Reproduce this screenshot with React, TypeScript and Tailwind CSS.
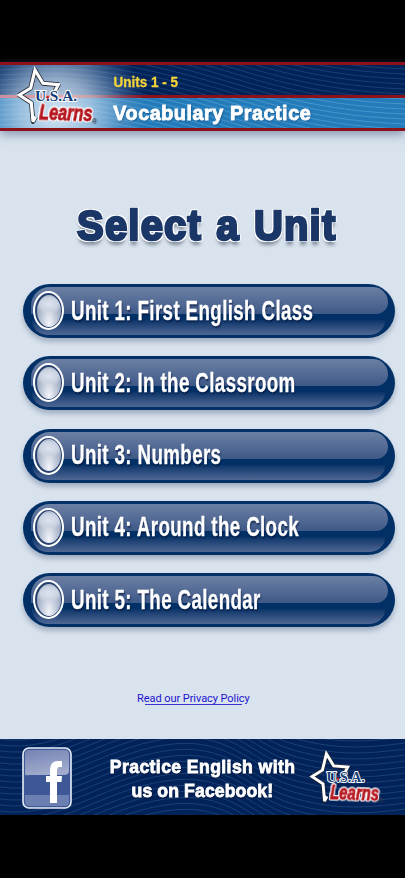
import React from 'react';

const units = [
  'Unit 1: First English Class',
  'Unit 2: In the Classroom',
  'Unit 3: Numbers',
  'Unit 4: Around the Clock',
  'Unit 5: The Calendar',
];

const footerLines = Array.from({ length: 34 }, (_, i) => i * 6 - 50);
const headerLines = Array.from({ length: 30 }, (_, i) => i * 5 - 75);

const HeaderWaves: React.FC<{ color: string; shift: number }> = ({ color, shift }) => (
  <svg className="absolute inset-0 h-full w-full" viewBox="0 0 405 30" preserveAspectRatio="none" fill="none" stroke={color} strokeWidth="1">
    {headerLines.map((y) => (
      <path key={y} d={`M0 ${y + shift} C70 ${y + shift - 4} 110 ${y + shift} 180 ${y + shift + 18} S300 ${y + shift + 60} 405 ${y + shift + 64}`} />
    ))}
  </svg>
);

const FooterWaves: React.FC = () => (
  <svg className="absolute inset-0 h-full w-full" viewBox="0 0 405 76" fill="none" stroke="#1a4075" strokeWidth="1">
    {footerLines.map((y) => (
      <path key={y} d={`M0 ${y + 14} C60 ${y + 22} 100 ${y - 18} 165 ${y - 28} S250 ${y} 290 ${y + 12} S360 ${y + 24} 405 ${y + 18}`} />
    ))}
  </svg>
);

const STAR = 'M165 107 L175 88 L129 84 L105 44 L92 98 L58 119 L94 143 L99 199 L107 184';

const Logo: React.FC<{ className: string; usa: string }> = ({ className, usa }) => (
  <svg className={className} viewBox="48 32 250 180" overflow="visible">
    <path d={STAR} fill="none" stroke="#20242c" strokeWidth="14" strokeLinejoin="round" />
    <path d={STAR} fill="none" stroke="#fff" strokeWidth="9.5" strokeMiterlimit="3" />
    <text
      x="105" y="138" fontSize="46" fontWeight="bold" textLength="126" lengthAdjust="spacingAndGlyphs"
      fill={usa} stroke="#fff" strokeWidth="6" strokeLinejoin="round" paintOrder="stroke"
      className="font-['Liberation_Serif',serif]"
    >
      U.S.A.
    </text>
    <circle cx="143" cy="126" r="4" fill="#c51c25" />
    <g
      transform="translate(117 192) rotate(2)"
      className="[filter:drop-shadow(2.5px_0_0_#fff)_drop-shadow(-2.5px_0_0_#fff)_drop-shadow(0_2.5px_0_#fff)_drop-shadow(0_-2.5px_0_#fff)]"
    >
      <text
        fontSize="67" fontWeight="bold" fontStyle="italic" textLength="160" lengthAdjust="spacingAndGlyphs"
        fill="#b5151e" stroke="#b5151e" strokeWidth="2.5" strokeLinejoin="round"
        className="font-['Liberation_Sans',sans-serif]"
      >
        Learns
      </text>
    </g>
    <text x="276" y="207" fontSize="22" fontWeight="bold" fill="#303947" className="font-['Liberation_Sans',sans-serif]">®</text>
  </svg>
);

const UnitButton: React.FC<{ label: string }> = ({ label }) => (
  <button className="relative flex h-[54px] w-[372px] items-center rounded-[27px] bg-[#003066] pl-[10px] text-left shadow-[0_4px_5px_rgba(80,100,130,0.4)]">
    <span className="absolute top-[3px] right-[7px] left-[8px] h-[27px] rounded-tl-[22px] rounded-tr-[18px] rounded-br-[14px] bg-linear-to-b from-[#6d80a4] to-[#3e5988]" />
    <span className="absolute right-[10px] bottom-[3px] left-[9px] h-[15px] rounded-b-[20px] bg-linear-to-b from-[#0a3469] to-[#4f6894]" />
    <span className="relative -mt-px flex h-[39px] w-[31px] shrink-0 rounded-[50%] border-2 border-white bg-[#29436f] p-[1.5px]">
      <span className="h-full w-full rounded-[50%] bg-[radial-gradient(ellipse_60%_30%_at_50%_28%,#dde3ee_0%,#ccd4e3_60%,rgba(204,212,227,0)_100%),radial-gradient(ellipse_at_50%_88%,#f2f5fa_0%,#c3ccdc_40%,#98a4be_80%)]" />
    </span>
    <span className="relative -mt-px ml-[7px] origin-left scale-x-[0.67] whitespace-nowrap text-[28px] leading-[54px] font-bold tracking-[0.55px] text-white [-webkit-text-stroke:0.3px_white] [text-shadow:1px_2px_2px_rgba(0,20,60,0.7)]">
      {label}
    </span>
  </button>
);

const App: React.FC = () => {
  return (
    <div className="flex h-[878px] w-[405px] flex-col overflow-hidden bg-black pt-[62px] pb-[63px] font-['Liberation_Sans',sans-serif]">
      <header className="relative z-10 flex h-[69px] shrink-0 flex-col bg-[#8d101b] py-[3px] shadow-[0_3px_10px_rgba(70,90,130,0.6)]">
        <div className="relative h-[30px] bg-[#02235a]">
          <HeaderWaves color="#183f72" shift={0} />
          <p className="relative z-10 origin-left scale-x-[0.9] pl-[126px] text-[15px] leading-[33px] font-bold text-[#f5d43a] [-webkit-text-stroke:0.3px_#f5d43a]">
            Units 1 - 5
          </p>
        </div>
        <div className="relative mt-[3px] h-[30px] bg-[#247bb9]">
          <HeaderWaves color="#4695cb" shift={2} />
          <h2 className="relative z-10 origin-left scale-x-[0.94] pl-[120.5px] text-[21px] leading-[30px] font-bold tracking-[0.6px] text-white [-webkit-text-stroke:0.9px_white] [text-shadow:1px_1px_2px_#12538b]">
            Vocabulary Practice
          </h2>
        </div>
        <div className="absolute inset-y-[3px] left-0 w-[150px] bg-[radial-gradient(ellipse_90px_85px_at_56px_48px,rgba(225,237,248,0.92)_0%,rgba(190,213,235,0.75)_40%,rgba(130,170,210,0.35)_75%,rgba(110,160,210,0)_100%)]">
          <div className="absolute top-[30px] left-0 h-[3px] w-[110px] bg-linear-to-r from-[#c98f9d] via-[#e6a5a8] to-transparent" />
          <Logo className="relative mt-px ml-[16px] h-[60px] w-[83.3px]" usa="#123b78" />
        </div>
      </header>

      <main className="flex flex-1 flex-col bg-[#d9e3ee]">
        <h1 className="mt-[68px] ml-[77px] origin-left scale-x-[0.93] text-[43px] leading-[52px] font-bold tracking-[1.3px] whitespace-nowrap text-[#1b3767] [word-spacing:2px] [-webkit-text-stroke:2.6px_#1b3767] [text-shadow:2px_0_0_#fff,-2px_0_0_#fff,0_2px_0_#fff,0_-2px_0_#fff,2px_2px_0_#fff,-2px_2px_0_#fff,2px_-2px_0_#fff,-2px_-2px_0_#fff,0_5px_4px_#7d8795]">
          Select a Unit
        </h1>
        <div className="mt-[33px] flex flex-col gap-[18.25px] pl-[23px]">
          {units.map((unit) => (
            <UnitButton key={unit} label={unit} />
          ))}
        </div>
        <a href="#" className="relative mt-[65px] ml-[137px] w-[113px] whitespace-nowrap font-['Roboto',sans-serif] text-[11px] leading-[14px] tracking-[-0.06px] text-[#1d13cf]">
          Read our Privacy Policy
          <span className="absolute bottom-px left-[8px] h-px w-[97px] bg-[#3a33d6]" />
        </a>
      </main>

      <footer className="relative flex h-[76px] shrink-0 overflow-hidden bg-[#02235a]">
        <FooterWaves />
        <svg className="relative mt-[8px] ml-[22px] h-[62px] w-[50px] shrink-0" viewBox="0 0 50 62">
          <defs>
            <linearGradient id="gloss" x1="0" y1="0" x2="0.3" y2="1">
              <stop offset="0" stopColor="#7483b4" />
              <stop offset="1" stopColor="#a2abcc" />
            </linearGradient>
          </defs>
          <rect x="1" y="1" width="48" height="60" rx="6" fill="#3e5796" stroke="#e8eef8" strokeWidth="1.6" />
          <path d="M3 27 V7 Q3 3 7 3 H43 Q47 3 47 7 V25 Q46 28 42 28 H7 Q3 29 3 27Z" fill="url(#gloss)" />
          <path d="M3 48H47V55Q47 59 43 59H7Q3 59 3 55Z" fill="#6b7fb1" />
          <path d="M28 56V35H24V29H28V24Q28 14 36 14H40V20H37.5Q35 20 35 24V29H40L39.5 35H35V56Z" fill="#fff" />
        </svg>
        <p className="relative mt-[16px] ml-[34px] mr-[2px] w-[188px] origin-center scale-x-[0.96] whitespace-nowrap text-center text-[18.4px] leading-[23.5px] font-bold tracking-[0.4px] text-white [-webkit-text-stroke:0.8px_white] [text-shadow:1px_1px_2px_#00102f]">
          Practice English with
          <br />
          <span className="pl-[5px] tracking-[0.1px]">us on Facebook!</span>
        </p>
        <Logo className="relative mt-[10.5px] ml-[13px] h-[55px] w-[76.3px] shrink-0" usa="#173f78" />
      </footer>
    </div>
  );
};

export default App;
